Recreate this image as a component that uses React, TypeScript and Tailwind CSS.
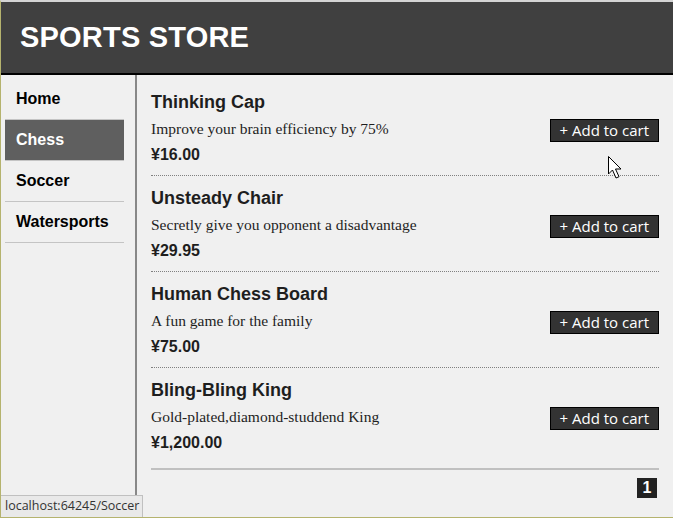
const products = [
  { name: "Thinking Cap", description: "Improve your brain efficiency by 75%", price: "¥16.00" },
  { name: "Unsteady Chair", description: "Secretly give you opponent a disadvantage", price: "¥29.95" },
  { name: "Human Chess Board", description: "A fun game for the family", price: "¥75.00" },
  { name: "Bling-Bling King", description: "Gold-plated,diamond-studdend King", price: "¥1,200.00" },
];

const categories = ["Home", "Chess", "Soccer", "Watersports"];

export default function App() {
  return (
    <div className="relative flex h-[518px] w-[673px] flex-col overflow-hidden border-t-2 border-b border-l border-t-[#d4d4d4] border-b-[#b5b36e] border-l-[#b5b36e] bg-[#f0f0f0] font-['Liberation_Sans',Arial,sans-serif] text-[#1e1e1e]">
      {/* Header */}
      <div className="flex h-[73px] shrink-0 items-center border-b-2 border-black bg-[#404040] pl-[19px]">
        <span className="text-[29px] font-bold tracking-[0.2px] text-white">SPORTS STORE</span>
      </div>

      <div className="flex flex-1">
        {/* Category nav */}
        <div className="w-[136px] shrink-0 border-r-2 border-[#888888] pt-[4px] pl-[4px] pr-[11px]">
          {categories.map((c) => (
            <div
              key={c}
              className={
                c === "Chess"
                  ? "flex h-[41px] items-center border-b border-[#c4c4c4] bg-[#5f5f5f] pl-[11px] text-[16px] font-bold text-white"
                  : "flex h-[41px] items-center border-b border-[#c4c4c4] pl-[11px] text-[16px] font-bold text-black"
              }
            >
              {c}
            </div>
          ))}
        </div>

        {/* Product list */}
        <div className="flex-1 pt-[5px] pl-[14px] pr-[14px]">
          {products.map((p, i) => (
            <div
              key={p.name}
              className={
                i < products.length - 1
                  ? "border-b border-dotted border-[#808080] pt-[11px] pb-[10px]"
                  : "pt-[11px] pb-[10px]"
              }
            >
              <div className="text-[18px] font-bold leading-[22px]">{p.name}</div>
              <div className="mt-[6px] flex items-start justify-between">
                <span className="font-['Liberation_Serif',serif] text-[15.5px] leading-[20px]">{p.description}</span>
                <button className="h-[23px] border border-black bg-[#333333] px-[9px] font-['Open_Sans',sans-serif] text-[15px] leading-[19px] text-white">
                  + Add to cart
                </button>
              </div>
              <div className="mt-[3px] text-[16px] font-bold leading-[20px]">{p.price}</div>
            </div>
          ))}

          {/* Pagination */}
          <div className="mt-[5px] flex justify-end border-t-2 border-[#c0c0c0] pt-[8px] pr-[2px]">
            <span className="flex h-[20px] w-[20px] items-center justify-center bg-[#222222] text-[16px] font-bold text-white">
              1
            </span>
          </div>
        </div>
      </div>

      {/* Browser status bar */}
      <div className="absolute bottom-0 left-0 flex h-[22px] w-[142px] items-center border-t border-r border-[#c0c0c0] bg-[#e9e9e9] pl-[4px] font-['Open_Sans',sans-serif] text-[12.5px] text-[#333333]">
        localhost:64245/Soccer
      </div>

      {/* Mouse cursor */}
      <svg className="absolute left-[607px] top-[154px]" width="16" height="26" viewBox="0 0 16 26">
        <path d="M0.5 0.5 L0.5 18 L4.5 14 L8 22 L11 20.7 L7.5 13 L13 13 Z" fill="white" stroke="black" strokeWidth="1" />
      </svg>
    </div>
  );
}
